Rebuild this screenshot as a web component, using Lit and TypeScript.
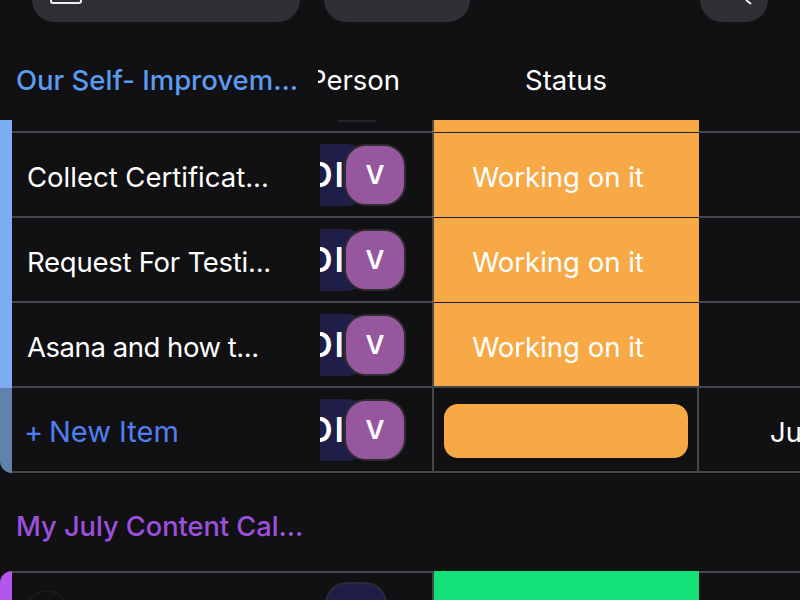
import { LitElement, css, html } from "lit";
import { customElement } from "lit/decorators.js";

const rows = [
  { name: "Collect Certificat...", tracking: 0 },
  { name: "Request For Testi...", tracking: -0.25 },
  { name: "Asana and how t...", tracking: -0.45 },
];

@customElement("app-root")
export class AppRoot extends LitElement {
  person() {
    return html`<div class="cell person">
      <div class="av navy">OI</div>
      <div class="av purple">V</div>
    </div>`;
  }

  override render() {
    return html`
      <div class="toolbar">
        <div class="pill filter">
          <svg class="ic" width="32" height="4" viewBox="0 0 32 4"><path d="M1 0v1a2 2 0 0 0 2 2h26a2 2 0 0 0 2-2V0" fill="none" stroke="#eee" stroke-width="2"/></svg>
        </div>
        <div class="pill sort"></div>
        <div class="pill search">
          <svg width="10" height="5" viewBox="0 0 10 5"><path d="M2 0l5 4" fill="none" stroke="#eee" stroke-width="2"/></svg>
        </div>
      </div>

      <div class="head">
        <div class="title blue">Our Self- Improvem...</div>
        <div class="hperson"><span>Person</span></div>
        <div class="hstatus">Status</div>
      </div>

      <div class="group">
        <div class="stripe-blue"></div>
        <div class="rows">
          <div class="row stub">
            <div class="cell name"></div>
            <div class="cell person"><div class="ghost"></div></div>
            <div class="cell status orange"></div>
            <div class="cell date"></div>
          </div>
          ${rows.map(
            (r) => html`<div class="row">
              <div class="cell name" style="letter-spacing: ${r.tracking}px">${r.name}</div>
              ${this.person()}
              <div class="cell status orange">Working on it</div>
              <div class="cell date"></div>
            </div>`
          )}
          <div class="row last">
            <div class="cell name add"><span class="plus">+</span>New Item</div>
            ${this.person()}
            <div class="cell status boxed"><div class="bar"></div></div>
            <div class="cell date"><span class="ju">Ju</span></div>
          </div>
        </div>
      </div>

      <div class="title purple-text next">My July Content Cal...</div>

      <div class="group">
        <div class="stripe-purple"></div>
        <div class="rows">
          <div class="row">
            <div class="cell name"><div class="ring"></div></div>
            <div class="cell person"><div class="av navy solo"></div></div>
            <div class="cell status green"></div>
            <div class="cell date"></div>
          </div>
        </div>
      </div>
    `;
  }

  static override styles = css`
    :host {
      display: block;
      width: 800px;
      height: 600px;
      overflow: hidden;
      background: #111013;
      color: #fff;
      font-family: Inter, "Liberation Sans", sans-serif;
      font-size: 27.5px;
    }

    .toolbar {
      display: flex;
      height: 22px;
      padding-left: 32px;
      gap: 24px;
    }

    .pill {
      background: #302e32;
      border-radius: 0 0 24px 24px;
      box-sizing: border-box;
    }

    .filter {
      width: 268px;
      padding-left: 18px;
    }

    .ic {
      display: block;
    }

    .sort {
      width: 146px;
    }

    .search {
      width: 68px;
      margin-left: 206px;
      padding-left: 44px;
      display: flex;
      align-items: flex-start;
    }

    .head {
      display: flex;
      height: 98px;
      padding-top: 18px;
      align-items: center;
      box-sizing: border-box;
    }

    .title {
      font-weight: 500;
      white-space: nowrap;
      padding-left: 16px;
    }

    .head .title {
      width: 302px;
    }

    .blue {
      color: #5b9bf0;
    }

    .purple-text {
      color: #9d50dd;
    }

    .hperson {
      width: 114px;
      overflow: hidden;
    }

    .hperson span {
      display: block;
      margin-left: -9px;
    }

    .hstatus {
      width: 268px;
      text-align: center;
    }

    .group {
      display: flex;
    }

    .stripe-blue {
      width: 12px;
      flex: none;
      background: linear-gradient(#7dacf2 0 268px, #5f83ad 268px);
      border-radius: 0 0 0 12px;
    }

    .stripe-purple {
      width: 12px;
      flex: none;
      background: #b257ea;
      border-radius: 12px 0 0 0;
    }

    .rows {
      flex: 1;
      min-width: 0;
    }

    .row {
      display: flex;
      height: 85px;
      box-sizing: border-box;
      border-top: 2px solid #48464a;
    }

    .row.stub {
      height: 13px;
      border-top: 0;
    }

    .row.stub + .row {
      margin-top: -2px;
    }

    .row.last {
      height: 87px;
      border-bottom: 2px solid #48464a;
    }

    .cell {
      box-sizing: border-box;
      display: flex;
      align-items: center;
    }

    .name {
      width: 308px;
      padding: 5px 0 0 15px;
      white-space: nowrap;
    }

    .add {
      padding: 3px 0 0 12px;
      color: #4f7ff0;
      font-size: 29px;
    }

    .plus {
      width: 25px;
    }

    .ring {
      width: 40px;
      height: 40px;
      flex: none;
      margin-left: -2px;
      align-self: flex-start;
      position: relative;
      top: 12px;
      border: 2px solid #1c1a1e;
      border-radius: 50%;
    }

    .person {
      width: 112px;
      overflow: hidden;
    }

    .ghost {
      width: 40px;
      height: 2px;
      margin-left: 17px;
      align-self: flex-start;
      background: #26242a;
      border-radius: 0 0 20px 20px;
    }

    .av {
      flex: none;
      height: 62px;
      border-radius: 22px;
      display: flex;
      align-items: center;
      justify-content: center;
      box-sizing: border-box;
    }

    .navy {
      background: #1f1e48;
      width: 80px;
      margin-left: -31px;
      justify-content: flex-end;
      padding-right: 23px;
      font-size: 34px;
      font-weight: 600;
      letter-spacing: 2px;
    }

    .navy.solo {
      width: 62px;
      margin-left: 5px;
      align-self: flex-start;
      margin-top: 9px;
      padding: 0;
      border: 2px solid #2b2a36;
    }

    .purple {
      background: #96579f;
      border: 2px solid #2f2c30;
      margin-left: -25px;
      font-size: 26px;
      font-weight: 600;
      width: 62px;
      position: relative;
    }

    .status {
      width: 267px;
      justify-content: center;
      border-left: 2px solid #48464a;
    }

    .orange {
      background: linear-gradient(#1e1c38, #1e1c38) 0 0 / 100% 1px no-repeat, #f6a945;
      margin-top: -2px;
      border-top: 1px solid #f6a945;
      padding: 5px 17px 0 0;
    }

    .stub .orange {
      background: #f6a945;
      margin-top: 0;
      border-top: 0;
    }

    .green {
      background: #12e17a;
      margin-top: -2px;
    }

    .boxed {
      padding: 2px 9px 0 10px;
      border-right: 2px solid #48464a;
    }

    .bar {
      width: 100%;
      height: 54px;
      background: #f6a945;
      border-radius: 14px;
    }

    .date {
      flex: 1;
      min-width: 0;
      overflow: hidden;
      white-space: nowrap;
      padding-top: 5px;
    }

    .ju {
      margin-left: 71px;
    }

    .next {
      height: 98px;
      box-sizing: border-box;
      padding-top: 37px;
      font-size: 27.2px;
    }
  `;
}
